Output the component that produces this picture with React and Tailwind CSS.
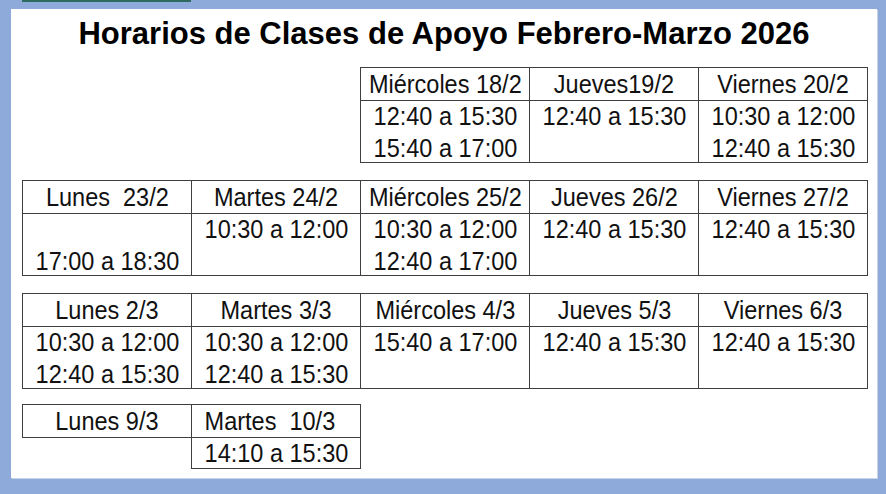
import React from 'react';

const weeks = [
  {
    offset: 2,
    gap: 'mt-0',
    days: [
      { day: 'Miércoles 18/2', lines: ['12:40 a 15:30', '15:40 a 17:00'] },
      { day: 'Jueves19/2', lines: ['12:40 a 15:30', ''] },
      { day: 'Viernes 20/2', lines: ['10:30 a 12:00', '12:40 a 15:30'] },
    ],
  },
  {
    offset: 0,
    gap: 'mt-[17px]',
    days: [
      { day: 'Lunes  23/2', lines: ['', '17:00 a 18:30'] },
      { day: 'Martes 24/2', lines: ['10:30 a 12:00', ''] },
      { day: 'Miércoles 25/2', lines: ['10:30 a 12:00', '12:40 a 17:00'] },
      { day: 'Jueves 26/2', lines: ['12:40 a 15:30', ''] },
      { day: 'Viernes 27/2', lines: ['12:40 a 15:30', ''] },
    ],
  },
  {
    offset: 0,
    gap: 'mt-[17px]',
    days: [
      { day: 'Lunes 2/3', lines: ['10:30 a 12:00', '12:40 a 15:30'] },
      { day: 'Martes 3/3', lines: ['10:30 a 12:00', '12:40 a 15:30'] },
      { day: 'Miércoles 4/3', lines: ['15:40 a 17:00', ''] },
      { day: 'Jueves 5/3', lines: ['12:40 a 15:30', ''] },
      { day: 'Viernes 6/3', lines: ['12:40 a 15:30', ''] },
    ],
  },
  {
    offset: 0,
    gap: 'mt-[15px]',
    days: [
      { day: 'Lunes 9/3', lines: null },
      { day: 'Martes  10/3  ', lines: ['14:10 a 15:30'] },
    ],
  },
];

// the source text is a little taller than it is wide, so squeeze it a bit
const Txt = ({ children }) => (
  <span className="inline-block whitespace-pre scale-x-[0.94]">{children}</span>
);

const DayColumn = ({ day, lines, first }) => (
  <div className={`flex flex-col w-[170px] ${first ? '' : '-ml-px'}`}>
    <div className="h-[34px] border border-[#3f3f3f] flex items-center justify-center leading-[31px]">
      <Txt>{day}</Txt>
    </div>
    {lines && (
      <div
        className={`-mt-px border border-[#3f3f3f] flex flex-col items-center ${
          lines.length === 1 ? 'h-[32px]' : 'h-[63px]'
        }`}
      >
        {lines.map((l, i) => (
          <div key={i} className="h-[32px] shrink-0 leading-[31px]">
            <Txt>{l}</Txt>
          </div>
        ))}
      </div>
    )}
  </div>
);

export default function App() {
  return (
    <div className="w-[886px] h-[494px] bg-[#8eaadb] overflow-hidden" style={{ fontFamily: '"Liberation Sans", Arial, sans-serif' }}>
      <div className="h-[9px] pl-[22px]">
        <div className="w-[169px] h-[2px] bg-[#2f6b5c]" />
      </div>
      <div className="ml-[11px] w-[866px] h-[469px] bg-white shadow-[1px_1px_0_#c9d3e6] text-[#111]">
        <h1 className="pt-[7px] h-[43px] leading-[36px] text-center text-[31px] font-bold text-black">
          Horarios de Clases de Apoyo Febrero-Marzo 2026
        </h1>
        <div className="mt-[15px] pl-[11px] text-[25px]">
          {weeks.map((w, wi) => (
            <div key={wi} className={`flex items-start ${w.gap}`}>
              {w.offset > 0 && <div className="w-[338px] shrink-0" />}
              {w.days.map((d, di) => (
                <DayColumn key={d.day} day={d.day} lines={d.lines} first={di === 0} />
              ))}
            </div>
          ))}
        </div>
      </div>
    </div>
  );
}
